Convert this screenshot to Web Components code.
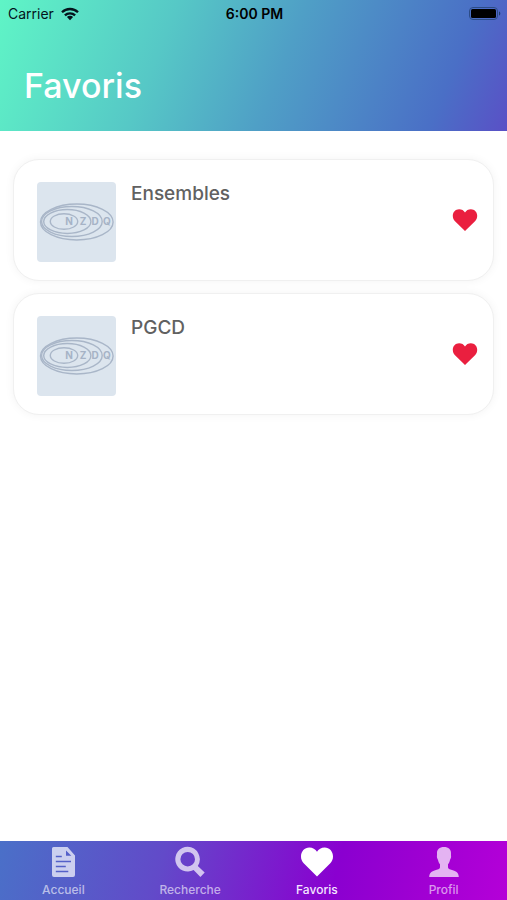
<!DOCTYPE html>
<html lang="fr">
<head>
<meta charset="utf-8">
<meta name="viewport" content="width=device-width, initial-scale=1">
<title>Favoris</title>
<style>
  body { margin: 0; background: #fff; font-family: Inter, "Liberation Sans", sans-serif; }
</style>
</head>
<body>
<favorites-app></favorites-app>

<template id="t-app">
  <style>
    :host { display: flex; flex-direction: column; min-height: 100vh; background: #fff; }
    main { flex: 1; display: flex; flex-direction: column; gap: 12px; padding: 28px 13px; }
  </style>
  <page-header heading="Favoris"><status-bar></status-bar></page-header>
  <main>
    <course-card>Ensembles</course-card>
    <course-card>PGCD</course-card>
  </main>
  <tab-bar>
    <tab-item href="#accueil" icon="doc">Accueil</tab-item>
    <tab-item href="#recherche" icon="search">Recherche</tab-item>
    <tab-item href="#favoris" icon="heart" current>Favoris</tab-item>
    <tab-item href="#profil" icon="person">Profil</tab-item>
  </tab-bar>
</template>

<template id="t-header">
  <style>
    :host { display: block; color: #fff; background: linear-gradient(112deg, #5ff5c6 0%, #56c8c6 32%, #4f9fc6 55%, #4a6fc6 86%, #5a50c6 100%); }
    h1 { margin: 0; padding: 36px 24px 23px; font-size: 34px; line-height: 44px; font-weight: 500; }
  </style>
  <header><slot></slot><h1></h1></header>
</template>

<template id="t-status">
  <style>
    :host { display: grid; grid-template-columns: 1fr auto 1fr; align-items: center; height: 28px; padding: 0 6px 0 8px; color: #04131c; font-size: 14px; line-height: 20px; }
    .net { display: flex; align-items: center; gap: 7px; }
    .time { font-weight: 600; color: #000; }
    .bat { justify-self: end; }
    svg { display: block; }
  </style>
  <span class="net">Carrier
    <svg width="18" height="14" viewBox="0 0 18 14" aria-hidden="true"><g fill="none" stroke="currentColor" stroke-width="2.3"><path d="M1 5.3a11.3 11.3 0 0 1 16 0"/><path d="M3.9 8.4a7.2 7.2 0 0 1 10.200 0"/></g><path d="M5.900 10.100a4.400 4.400 0 0 1 6.200 0L9 13.300z" fill="currentColor"/></svg>
  </span>
  <span class="time">6:00 PM</span>
  <svg class="bat" width="32" height="14" viewBox="0 0 32 14" aria-hidden="true"><rect x=".5" y=".5" width="28" height="12" rx="3.500" fill="none" stroke="#2c4c86"/><rect x="2" y="2" width="25" height="9" rx="1.500" fill="#000"/><path d="M30 4.500q1.300 0 1.300 2T30 8.500z" fill="#203e70"/></svg>
</template>

<template id="t-card">
  <style>
    :host { display: block; border: 1px solid #f0f0f0; border-radius: 26px; background: #fff; box-shadow: 0 0 10px rgba(0,0,0,.05); }
    article { display: flex; align-items: flex-start; gap: 15px; padding: 22px 15px 18px 23px; }
    h2 { flex: 1; margin: 0; font-size: 19px; line-height: 24px; font-weight: 500; color: #616161; }
    button { align-self: center; display: block; margin: 0; padding: 0 0 5px; border: 0; background: none; color: #ea1f3f; cursor: pointer; }
    svg { display: block; }
  </style>
  <article>
    <set-diagram></set-diagram>
    <h2><slot></slot></h2>
    <button type="button" aria-label="Retirer des favoris" aria-pressed="true">
      <svg width="26" height="24" viewBox="0 0 26 24" aria-hidden="true"><path d="M13 23L3 13.200C1.500 11.700 .8 9.900 .8 7.800.8 4 3.500 1.200 7.100 1.200c2.600 0 4.700 1.200 5.900 3.300 1.200-2.100 3.300-3.300 5.900-3.300 3.600 0 6.300 2.800 6.300 6.600 0 2.100-.7 3.900-2.200 5.400z" fill="currentColor"/></svg>
    </button>
  </article>
</template>

<template id="t-diagram">
  <style>
    :host { display: block; border-radius: 4px; overflow: hidden; background: #dce5ee; }
    svg { display: block; }
    text { font: 700 10px Inter, "Liberation Sans", sans-serif; fill: #a6b3c6; text-anchor: middle; }
  </style>
  <svg width="79" height="80" viewBox="0 0 79 80" role="img" aria-label="N, Z, D, Q">
    <g fill="none" stroke="#a9b6c8" stroke-width="1.400">
      <ellipse cx="39.800" cy="40" rx="36.300" ry="18"/>
      <ellipse cx="34.900" cy="39.500" rx="30.300" ry="15"/>
      <ellipse cx="30.300" cy="39.500" rx="23.600" ry="12"/>
      <ellipse cx="27" cy="39.500" rx="13.700" ry="7.800"/>
    </g>
    <text x="32" y="43">N</text><text x="46" y="43">Z</text><text x="58" y="43">D</text><text x="70" y="43">Q</text>
  </svg>
</template>

<template id="t-tabs">
  <style>
    :host { display: block; position: sticky; bottom: 0; background: linear-gradient(104deg, #4a70c8 0%, #624ac9 32%, #8a00d0 66%, #9c00d2 80%, #b500d8 100%); }
    nav { display: grid; grid-template-columns: repeat(4, 1fr); }
  </style>
  <nav aria-label="Navigation principale"><slot></slot></nav>
</template>

<template id="t-tab">
  <style>
    :host { display: block; color: rgba(255,255,255,.7); --label: rgba(255,255,255,.6); }
    :host([current]) { color: #fff; --label: #f4e6ff; }
    a { display: flex; flex-direction: column; align-items: center; gap: 3px; padding: 5px 0 1px; color: inherit; text-decoration: none; }
    .label { color: var(--label); font-size: 12px; line-height: 18px; font-weight: 500; }
    svg { display: block; }
  </style>
  <a><svg width="34" height="32" viewBox="0 0 34 32" fill="currentColor" aria-hidden="true"></svg><span class="label"><slot></slot></span></a>
</template>

<script>
  const icons = {
    doc: '<path fill-rule="evenodd" d="M7.500 1H21.500L29 9.500V29q0 2-2 2H8q-2 0-2-2V2.500Q6 1 7.500 1zM20 4.500V9.800H25.300zM9.800 9.700v1.500h6V9.700zM9.800 14.700v1.500h15.200v-1.500zM9.800 19.700v1.500h10v-1.500zM9.800 24.700v1.500h12.500v-1.500z"/>',
    search: '<path fill-rule="evenodd" d="M14.700 .8a12.400 12.400 0 1 0 5.900 23.300L27.400 31l4.300-4.400-6.900-6.700A12.400 12.400 0 0 0 14.700 .8zM14.700 5.900a7.300 7.300 0 1 1 0 14.600 7.300 7.300 0 0 1 0-14.600z"/>',
    heart: '<path d="M17 30.500L3.700 17.200C1.900 15.400 1 13.200 1 10.600 1 5.300 4.600 1.500 9.300 1.500c3.400 0 6.100 1.600 7.700 4.300 1.600-2.700 4.300-4.300 7.700-4.300 4.700 0 8.300 3.800 8.300 9.100 0 2.600-.9 4.800-2.700 6.600z"/>',
    person: '<path d="M17 1c4.500 0 7.200 2.500 7 6.500-.1 1.500.1 2 .1 3.300 0 1.500-.8 2-1.100 3.300-.4 2-1.100 3.200-2 4.200v3.200c.2 1.500 2.200 2 5.500 3 3.500 1 5 2.500 5.300 6.500H2.200c.3-4 1.800-5.500 5.300-6.500 3.300-1 5.300-1.500 5.500-3v-3.200c-.9-1-1.600-2.200-2-4.200-.3-1.300-1.100-1.800-1.100-3.300 0-1.300.2-1.800.1-3.300C9.800 3.500 12.500 1 17 1z"/>'
  };

  class BaseElement extends HTMLElement {
    constructor() {
      super();
      this.attachShadow({ mode: 'open' }).append(
        document.getElementById(this.constructor.template).content.cloneNode(true));
    }
  }
  class StatusBar extends BaseElement { static template = 't-status'; }
  class PageHeader extends BaseElement {
    static template = 't-header';
    connectedCallback() { this.shadowRoot.querySelector('h1').textContent = this.getAttribute('heading'); }
  }
  class SetDiagram extends BaseElement { static template = 't-diagram'; }
  class CourseCard extends BaseElement { static template = 't-card'; }
  class TabItem extends BaseElement {
    static template = 't-tab';
    connectedCallback() {
      const link = this.shadowRoot.querySelector('a');
      link.href = this.getAttribute('href');
      if (this.hasAttribute('current')) link.setAttribute('aria-current', 'page');
      this.shadowRoot.querySelector('svg').innerHTML = icons[this.getAttribute('icon')];
    }
  }
  class TabBar extends BaseElement { static template = 't-tabs'; }
  class FavoritesApp extends BaseElement { static template = 't-app'; }

  customElements.define('status-bar', StatusBar);
  customElements.define('page-header', PageHeader);
  customElements.define('set-diagram', SetDiagram);
  customElements.define('course-card', CourseCard);
  customElements.define('tab-item', TabItem);
  customElements.define('tab-bar', TabBar);
  customElements.define('favorites-app', FavoritesApp);
</script>
</body>
</html>
